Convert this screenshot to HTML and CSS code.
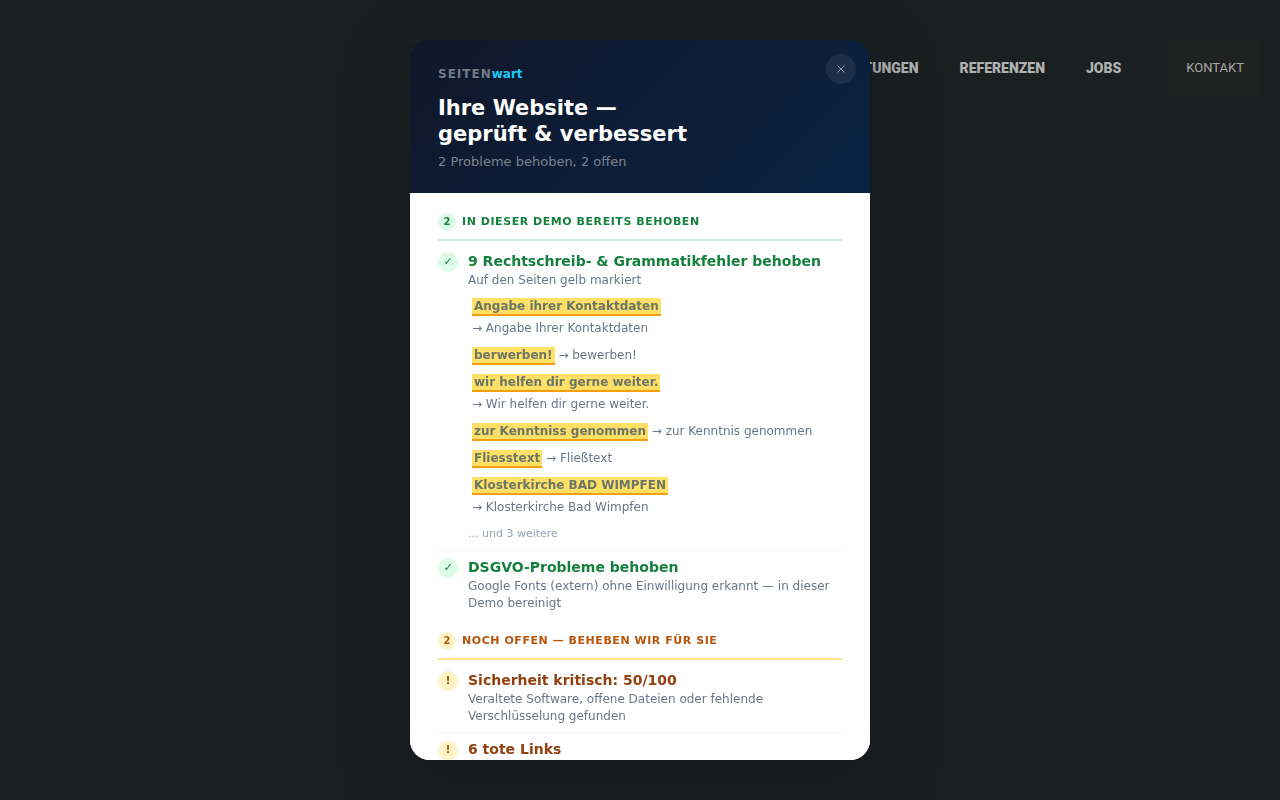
FILE: index.html
```html
<!DOCTYPE html>
<html lang="de">
<head>
<meta charset="utf-8">
<meta name="viewport" content="width=device-width, initial-scale=1">
<title>SEITENwart</title>
<link rel="stylesheet" href="styles.css">
</head>
<body>
<nav class="site-nav">
  <a class="nav-link" href="#">Leistungen</a>
  <a class="nav-link" href="#">Referenzen</a>
  <a class="nav-link" href="#">Jobs</a>
  <a class="nav-cta" href="#">Kontakt</a>
</nav>
<div class="overlay">
  <section class="dialog" role="dialog" aria-modal="true" aria-labelledby="title">
    <header class="dialog-head">
      <button class="close" type="button" aria-label="Schließen"><svg width="10" height="10" viewBox="0 0 10 10"><path d="M1.500 1.500l7 7M8.500 1.500l-7 7"/></svg></button>
      <div class="brand">SEITEN<span class="brand-accent">wart</span></div>
      <h1 class="title" id="title">Ihre Website —<br>geprüft &amp; verbessert</h1>
      <p class="subtitle">2 Probleme behoben, 2 offen</p>
    </header>
    <div class="dialog-body">
      <section class="group fixed">
        <h2 class="group-head"><span class="count">2</span>In dieser Demo bereits behoben</h2>
        <article class="item">
          <span class="mark-icon">✓</span>
          <div class="item-text">
            <h3 class="item-title">9 Rechtschreib- &amp; Grammatikfehler behoben</h3>
            <p class="item-desc">Auf den Seiten gelb markiert</p>
            <ul class="fixes">
              <li><mark>Angabe ihrer Kontaktdaten</mark> <span class="fix">→ Angabe Ihrer Kontaktdaten</span></li>
              <li><mark>berwerben!</mark> <span class="fix">→ bewerben!</span></li>
              <li><mark>wir helfen dir gerne weiter.</mark> <span class="fix">→ Wir helfen dir gerne weiter.</span></li>
              <li><mark>zur Kenntniss genommen</mark> <span class="fix">→ zur Kenntnis genommen</span></li>
              <li><mark>Fliesstext</mark> <span class="fix">→ Fließtext</span></li>
              <li><mark>Klosterkirche BAD WIMPFEN</mark> <span class="fix">→ Klosterkirche Bad Wimpfen</span></li>
            </ul>
            <p class="more">... und 3 weitere</p>
          </div>
        </article>
        <article class="item">
          <span class="mark-icon">✓</span>
          <div class="item-text">
            <h3 class="item-title">DSGVO-Probleme behoben</h3>
            <p class="item-desc">Google Fonts (extern) ohne Einwilligung erkannt — in dieser Demo bereinigt</p>
          </div>
        </article>
      </section>
      <section class="group open">
        <h2 class="group-head"><span class="count">2</span>Noch offen — beheben wir für Sie</h2>
        <article class="item">
          <span class="mark-icon">!</span>
          <div class="item-text">
            <h3 class="item-title">Sicherheit kritisch: 50/100</h3>
            <p class="item-desc">Veraltete Software, offene Dateien oder fehlende Verschlüsselung gefunden</p>
          </div>
        </article>
        <article class="item">
          <span class="mark-icon">!</span>
          <div class="item-text">
            <h3 class="item-title">6 tote Links</h3>
          </div>
        </article>
      </section>
    </div>
  </section>
</div>
</body>
</html>
```
FILE: styles.css
```css
* { box-sizing: border-box; }
body {
  margin: 0;
  min-height: 100vh;
  background: #1a2020;
  font-family: "DejaVu Sans", sans-serif;
}
h1, h2, h3, p, ul { margin: 0; padding: 0; }
.site-nav {
  display: flex;
  justify-content: flex-end;
  align-items: center;
  gap: 41px;
  padding: 40px 20px;
  font-family: "Roboto", sans-serif;
  text-transform: uppercase;
}
.site-nav a { color: #b0b2b2; text-decoration: none; }
.nav-link { font-size: 14px; font-weight: 900; }
.site-nav .nav-cta {
  margin-left: 8px;
  padding: 16px;
  background: #1e2120;
  color: #a5a7a6;
  font-size: 13px;
  line-height: 24px;
}
.overlay {
  position: fixed;
  inset: 0;
  display: flex;
  align-items: center;
  justify-content: center;
  padding: 20px;
}
.dialog {
  position: relative;
  display: flex;
  flex-direction: column;
  width: 100%;
  max-width: 460px;
  max-height: 90vh;
  overflow: hidden;
  border-radius: 20px;
  background: linear-gradient(#0f172a 100px, #fff 100px);
  box-shadow: 0 20px 60px rgba(15, 18, 25, 0.5);
}
.dialog-head {
  flex: none;
  padding: 26px 28px 21px;
  background: linear-gradient(135deg, #0f172a, #0a2342);
}
.close {
  position: absolute;
  top: 14px;
  right: 14px;
  display: grid;
  place-items: center;
  width: 30px;
  height: 30px;
  padding: 0;
  border: 0;
  border-radius: 50%;
  background: #1d2e49;
}
.close path { fill: none; stroke: #8b95a5; stroke-width: 1; }
.brand {
  margin-bottom: 12px;
  color: #747b88;
  font-size: 12px;
  line-height: 17px;
  font-weight: 700;
  letter-spacing: 1px;
}
.brand-accent { color: #15cdf5; letter-spacing: 0; }
.title { color: #fff; font-size: 21px; line-height: 26px; font-weight: 700; }
.subtitle { margin-top: 5px; color: #7b8391; font-size: 13px; line-height: 20px; }
.dialog-body { min-height: 0; padding: 20px 28px; overflow: hidden; background: #fff; }
.group-head {
  display: flex;
  align-items: center;
  gap: 6px;
  margin-bottom: 4px;
  padding-bottom: 8px;
  border-bottom: 2px solid;
  font-size: 11px;
  line-height: 18px;
  letter-spacing: 0.05em;
  text-transform: uppercase;
}
.count {
  width: 18px;
  height: 18px;
  border-radius: 50%;
  font-size: 10px;
  letter-spacing: 0;
  text-align: center;
}
.item { display: flex; gap: 10px; padding: 7px 0; border-bottom: 1px solid #f1f3f5; }
.item:last-child { border-bottom: 0; }
.mark-icon {
  flex: none;
  width: 20px;
  height: 20px;
  border-radius: 50%;
  font-size: 11px;
  line-height: 20px;
  text-align: center;
}
.item-text { flex: 1; min-width: 0; }
.item-title { font-size: 14px; line-height: 19px; }
.item-desc { margin-top: 1px; color: #697689; font-size: 12px; line-height: 17px; }
.group + .group { margin-top: 13px; }
.fixed .group-head { border-color: #bbefda; color: #15803d; }
.fixed .count, .fixed .mark-icon { background: #dcfce7; color: #15803d; }
.fixed .item-title { color: #15803d; }
.open .group-head { border-color: #fde58a; color: #b45309; }
.open .count, .open .mark-icon { background: #fef3c7; color: #b45309; }
.open .mark-icon { font-weight: 700; }
.open .item-title { color: #92400e; }
.fixes {
  display: grid;
  gap: 5px;
  margin-top: 6px;
  padding: 0 4px;
  list-style: none;
  color: #697689;
  font-size: 12px;
  line-height: 22px;
}
.fixes mark {
  padding: 1px 2px;
  border-bottom: 2px solid #f59e0b;
  background: #ffe066;
  color: #6b7568;
  font-weight: 700;
}
.fix { display: inline-block; }
.more { margin-top: 7px; color: #97a3b4; font-size: 11px; line-height: 18px; }
```
